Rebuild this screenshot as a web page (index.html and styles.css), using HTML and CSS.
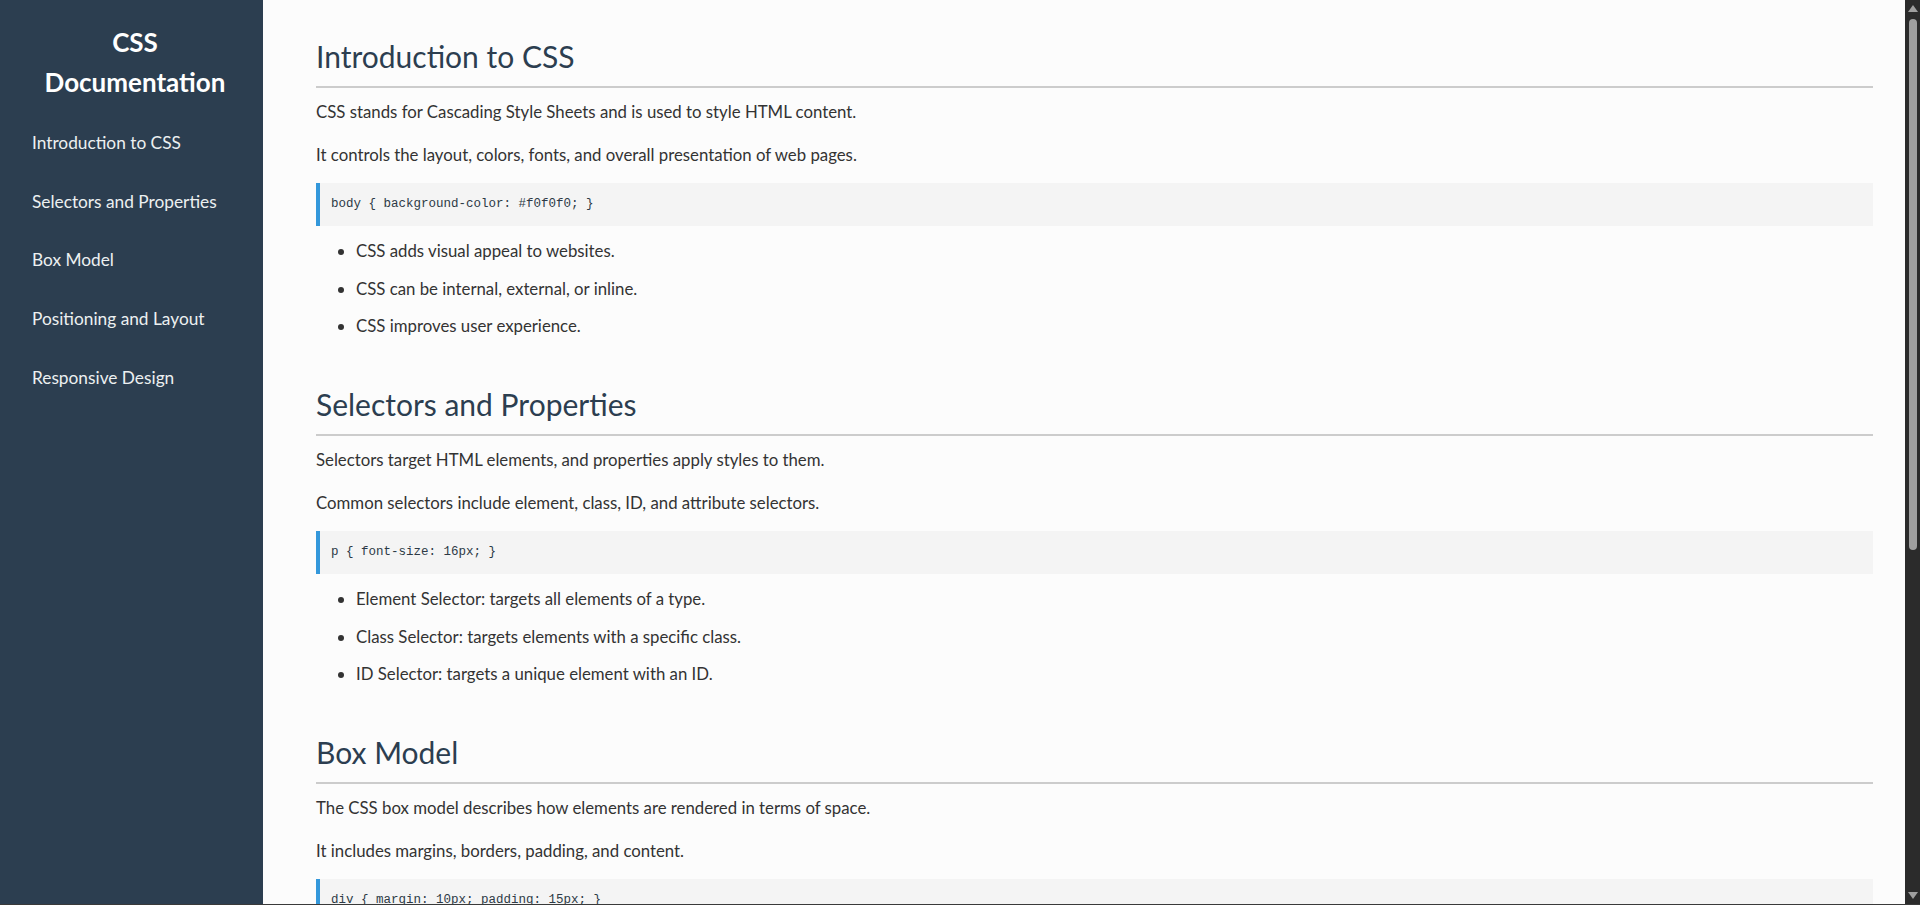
FILE: index.html
```html
<!DOCTYPE html>
<html lang="en">
<head>
<meta charset="utf-8">
<title>CSS Documentation</title>
<link rel="stylesheet" href="styles.css">
</head>
<body>
<div class="layout">
  <aside class="sidebar">
    <h1 class="sidebar-title">CSS Documentation</h1>
    <nav class="nav">
      <a class="nav-link" href="#intro">Introduction to CSS</a>
      <a class="nav-link" href="#selectors">Selectors and Properties</a>
      <a class="nav-link" href="#box">Box Model</a>
      <a class="nav-link" href="#layout">Positioning and Layout</a>
      <a class="nav-link" href="#responsive">Responsive Design</a>
    </nav>
  </aside>
  <main class="main">
    <section class="section" id="intro">
      <h2 class="section-title">Introduction to CSS</h2>
      <p class="text">CSS stands for Cascading Style Sheets and is used to style HTML content.</p>
      <p class="text">It controls the layout, colors, fonts, and overall presentation of web pages.</p>
      <pre class="code">body { background-color: #f0f0f0; }</pre>
      <ul class="list">
        <li class="item">CSS adds visual appeal to websites.</li>
        <li class="item">CSS can be internal, external, or inline.</li>
        <li class="item">CSS improves user experience.</li>
      </ul>
    </section>
    <section class="section" id="selectors">
      <h2 class="section-title">Selectors and Properties</h2>
      <p class="text">Selectors target HTML elements, and properties apply styles to them.</p>
      <p class="text">Common selectors include element, class, ID, and attribute selectors.</p>
      <pre class="code">p { font-size: 16px; }</pre>
      <ul class="list">
        <li class="item">Element Selector: targets all elements of a type.</li>
        <li class="item">Class Selector: targets elements with a specific class.</li>
        <li class="item">ID Selector: targets a unique element with an ID.</li>
      </ul>
    </section>
    <section class="section" id="box">
      <h2 class="section-title">Box Model</h2>
      <p class="text">The CSS box model describes how elements are rendered in terms of space.</p>
      <p class="text">It includes margins, borders, padding, and content.</p>
      <pre class="code">div { margin: 10px; padding: 15px; }</pre>
      <ul class="list">
        <li class="item">Content: the actual text or image inside the box.</li>
        <li class="item">Padding: space between the content and the border.</li>
        <li class="item">Margin: space outside the border.</li>
      </ul>
    </section>
    <section class="section" id="layout">
      <h2 class="section-title">Positioning and Layout</h2>
      <p class="text">Positioning controls where elements appear on the page.</p>
      <p class="text">Common values include static, relative, absolute, fixed, and sticky.</p>
      <pre class="code">.box { position: relative; top: 10px; }</pre>
    </section>
    <section class="section" id="responsive">
      <h2 class="section-title">Responsive Design</h2>
      <p class="text">Responsive design makes web pages look good on all screen sizes.</p>
      <p class="text">Media queries apply styles based on the width of the device.</p>
      <pre class="code">@media (max-width: 600px) { body { font-size: 14px; } }</pre>
    </section>
  </main>
  <div class="scrollbar" aria-hidden="true">
    <div class="scroll-btn"><span class="arrow-up"></span></div>
    <div class="scroll-track"><div class="scroll-thumb"></div></div>
    <div class="scroll-btn scroll-btn-bottom"><span class="arrow-down"></span></div>
  </div>
</div>
<div class="window-edge"></div>
</body>
</html>
```

FILE: styles.css
```css
html, body {
  margin: 0;
  padding: 0;
  height: 100%;
}

body {
  display: grid;
  grid-template-rows: 1fr 1px;
  font-family: "Lato", "Open Sans", sans-serif;
  font-size: 16.8px;
  line-height: 1.7;
  color: #333333;
  background: #fcfcfc;
  overflow: hidden;
}

.layout {
  display: flex;
  min-height: 0;
}

.window-edge {
  background: #3a3a3a;
}

/* Sidebar */
.sidebar {
  width: 263px;
  flex: 0 0 263px;
  background: #2c3e50;
  color: #ffffff;
  padding: 22px 20px 20px;
  box-sizing: border-box;
}

.sidebar-title {
  margin: 0;
  padding-left: 7px;
  font-size: 26px;
  font-weight: 700;
  line-height: 40px;
  text-align: center;
}

.nav {
  display: flex;
  flex-direction: column;
  gap: 11.5px;
  margin-top: 17px;
}

.nav-link {
  display: block;
  padding: 10px 12px;
  color: #ecf0f1;
  text-decoration: none;
  font-size: 17.3px;
  line-height: 27.2px;
}

/* Main */
.main {
  flex: 1;
  min-width: 0;
  overflow: hidden;
  padding: 40px 32px 40px 53px;
  display: flex;
  flex-direction: column;
  gap: 49px;
}

.section {
  display: flex;
  flex-direction: column;
  flex: 0 0 auto;
}

.section-title {
  margin: 0;
  font-size: 30px;
  font-weight: 400;
  line-height: 33.6px;
  color: #2c3e50;
  padding-bottom: 12px;
  border-bottom: 2px solid #cccccc;
}

.text {
  margin: 16px 0 0;
  line-height: 27.2px;
}

.section-title + .text {
  margin-top: 10px;
}

.code {
  margin: 15px 0 0;
  padding: 10px 11px;
  background: #f4f4f4;
  border-left: 4px solid #3498db;
  font-family: "Liberation Mono", "DejaVu Sans Mono", monospace;
  font-size: 12.5px;
  line-height: 23px;
  color: #2d3a46;
}

.list {
  margin: 11px 0 0;
  padding-left: 40px;
  display: flex;
  flex-direction: column;
  gap: 10.3px;
}

.item {
  line-height: 27.2px;
}

/* Scrollbar (drawn) */
.scrollbar {
  flex: 0 0 15px;
  width: 15px;
  background: #2b2b2b;
  display: flex;
  flex-direction: column;
}

.scroll-btn {
  flex: 0 0 17px;
  display: flex;
  justify-content: center;
  padding-top: 5px;
  box-sizing: border-box;
}

.scroll-btn-bottom {
  padding-top: 0;
  padding-bottom: 5px;
  align-items: flex-end;
}

.arrow-up {
  width: 0;
  height: 0;
  border-left: 5px solid transparent;
  border-right: 5px solid transparent;
  border-bottom: 7px solid #9f9f9f;
}

.arrow-down {
  width: 0;
  height: 0;
  border-left: 5px solid transparent;
  border-right: 5px solid transparent;
  border-top: 7px solid #9f9f9f;
}

.scroll-track {
  flex: 1;
  padding-top: 2px;
}

.scroll-thumb {
  width: 8px;
  margin-left: 4px;
  height: 531px;
  background: #9f9f9f;
  border-radius: 4px;
}
```
